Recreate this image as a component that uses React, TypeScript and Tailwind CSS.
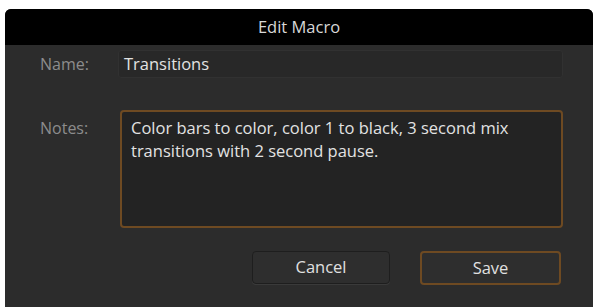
import React from "react";

export default function App() {
  return (
    <div className="w-[598px] h-[307px] bg-white overflow-hidden" style={{ fontFamily: '"Open Sans", "Noto Sans", sans-serif' }}>
      <div className="ml-[5px] mt-[9px] w-[588px] h-[298px] rounded-t-[6px] bg-[#2c2c2c] flex flex-col overflow-hidden">
        <div className="h-[36px] bg-black flex items-center justify-center text-[16.5px] text-[#d8d8d8]">Edit Macro</div>
        <div className="flex flex-col pl-[35px] pr-[30px] pt-[5px]">
          <div className="flex items-center h-[28px]">
            <div className="w-[78px] text-[16px] text-[#8c8c8c]">Name:</div>
            <div className="flex-1 h-[28px] rounded-[3px] bg-[#282828] border border-[#313131] flex items-center px-[5px] text-[16.5px] text-[#e2e2e2]">Transitions</div>
          </div>
          <div className="flex mt-[32px]">
            <div className="w-[80px] text-[16px] text-[#8c8c8c] pt-[6px]">Notes:</div>
            <div className="flex-1 h-[118px] rounded-[4px] bg-[#232323] border-2 border-[#6e4a22] px-[9px] pt-[4px] text-[16.5px] leading-[23px] text-[#e2e2e2]">
              Color bars to color, color 1 to black, 3 second mix transitions with 2 second pause.
            </div>
          </div>
          <div className="flex justify-end gap-[30px] mt-[23px] pr-[2px]">
            <div className="w-[138px] h-[33px] rounded-[4px] bg-[#2e2e2e] border border-[#1e1e1e] shadow-[0_1px_0_#3a3a3a] flex items-center justify-center text-[16.5px] text-[#e0e0e0]">Cancel</div>
            <div className="w-[141px] h-[34px] rounded-[4px] bg-[#2e2e2e] border-2 border-[#6e4a22] flex items-center justify-center text-[16.5px] text-[#e0e0e0]">Save</div>
          </div>
        </div>
      </div>
    </div>
  );
}
